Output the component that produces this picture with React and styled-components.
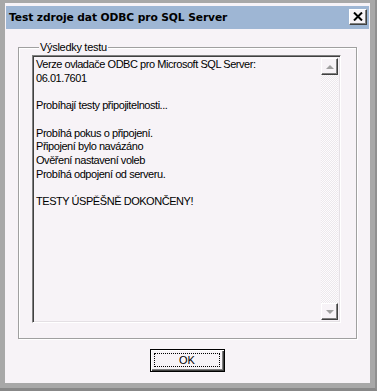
import React from "react";
import styled, { createGlobalStyle } from "styled-components";

const face = "#f7f3f7";
const frameGray = "#a8a8a8";
const shadow = "#808080";
const darkShadow = "#404040";

const GlobalStyle = createGlobalStyle`
  html, body {
    margin: 0;
    padding: 0;
    background: ${frameGray};
  }
  body {
    font-family: "Liberation Sans", Arial, sans-serif;
    font-size: 11px;
    color: #000;
  }
`;

const lines = [
  "Verze ovladače ODBC pro Microsoft SQL Server:",
  "06.01.7601",
  "",
  "Probíhají testy připojitelnosti...",
  "",
  "Probíhá pokus o připojení.",
  "Připojení bylo navázáno",
  "Ověření nastavení voleb",
  "Probíhá odpojení od serveru.",
  "",
  "TESTY ÚSPĚŠNĚ DOKONČENY!",
];

const App = () => {
  return (
    <>
      <GlobalStyle />
      <Frame>
        <Window>
          <TitleBar>
            <Title>Test zdroje dat ODBC pro SQL Server</Title>
            <CloseButton>
              <svg width="10" height="9" viewBox="0 0 10 9">
                <path d="M1 0.5 L9 8.5 M9 0.5 L1 8.5" stroke="#000" strokeWidth="2" />
              </svg>
            </CloseButton>
          </TitleBar>
          <Body>
            <GroupBox>
              <Legend>Výsledky testu</Legend>
              <ResultBox>
                <ResultText>
                  {lines.map((l, i) => (
                    <Line key={i}>{l || "\u00a0"}</Line>
                  ))}
                </ResultText>
                <ScrollBar>
                  <ScrollButton>
                    <Arrow $up />
                  </ScrollButton>
                  <Track />
                  <ScrollButton>
                    <Arrow />
                  </ScrollButton>
                </ScrollBar>
              </ResultBox>
            </GroupBox>
            <ButtonRow>
              <OkButton>
                <Focus>OK</Focus>
              </OkButton>
            </ButtonRow>
          </Body>
        </Window>
      </Frame>
    </>
  );
};

export default App;

const Frame = styled.div`
  width: 377px;
  height: 391px;
  box-sizing: border-box;
  background: ${frameGray};
  border-right: 2px solid #909090;
  border-bottom: 3px solid #888888;
  padding: 3px 5px 5px 5px;
`;

const Window = styled.div`
  height: 100%;
  background: ${face};
  display: flex;
  flex-direction: column;
  padding: 3px 1px 0 1px;
  box-sizing: border-box;
`;

const TitleBar = styled.div`
  height: 23px;
  background: #9eb6d4;
  display: flex;
  align-items: center;
  justify-content: space-between;
  padding: 0 2px 0 3px;
  flex-shrink: 0;
`;

const Title = styled.div`
  font-family: "DejaVu Sans", Verdana, sans-serif;
  font-weight: bold;
  font-size: 10.7px;
  color: #000;
  letter-spacing: -0.1px;
  margin-top: -1px;
`;

const CloseButton = styled.div`
  width: 18px;
  height: 16px;
  box-sizing: border-box;
  background: ${face};
  border-top: 1px solid #fff;
  border-left: 1px solid #fff;
  border-right: 1px solid ${darkShadow};
  border-bottom: 1px solid ${darkShadow};
  box-shadow: inset -1px -1px ${shadow};
  display: flex;
  align-items: center;
  justify-content: center;
  margin-top: -2px;
`;

const Body = styled.div`
  flex: 1;
  display: flex;
  flex-direction: column;
  padding: 18px 12px 0 12px;
`;

const GroupBox = styled.div`
  height: 292px;
  box-sizing: border-box;
  border: 1px solid #a0a0a0;
  box-shadow: inset 1px 1px #fff, 1px 1px #fff;
  padding: 0 15px 15px 13px;
  display: flex;
  flex-direction: column;
`;

const Legend = styled.div`
  align-self: flex-start;
  background: ${face};
  line-height: 13px;
  margin: -7px 0 0 7px;
  padding: 0 1px;
  height: 13px;
  letter-spacing: -0.3px;
`;

const ResultBox = styled.div`
  margin-top: 1px;
  flex: 1;
  display: flex;
  box-sizing: border-box;
  border-top: 1px solid ${shadow};
  border-left: 1px solid ${shadow};
  border-right: 1px solid #fff;
  border-bottom: 1px solid #fff;
  box-shadow: inset 1px 1px ${darkShadow}, inset -1px -1px #e4e0e4;
  padding: 2px 2px 2px 2px;
  min-height: 0;
`;

const ResultText = styled.div`
  flex: 1;
  padding: 0 0 0 1px;
`;

const Line = styled.div`
  line-height: 13.7px;
  white-space: pre;
  letter-spacing: -0.45px;
`;

const ScrollBar = styled.div`
  width: 17px;
  display: flex;
  flex-direction: column;
`;

const ScrollButton = styled.div`
  height: 17px;
  box-sizing: border-box;
  background: ${face};
  border-top: 1px solid #fff;
  border-left: 1px solid #fff;
  border-right: 1px solid ${darkShadow};
  border-bottom: 1px solid ${darkShadow};
  box-shadow: inset -1px -1px ${shadow};
  display: flex;
  align-items: center;
  justify-content: center;
`;

const Arrow = styled.div`
  width: 0;
  height: 0;
  border-left: 4px solid transparent;
  border-right: 4px solid transparent;
  ${(p) =>
    p.$up
      ? `border-bottom: 4px solid #a0a0a0;`
      : `border-top: 4px solid #a0a0a0;`}
`;

const Track = styled.div`
  flex: 1;
  background-color: #fdfbfd;
  background-image: repeating-conic-gradient(#ece8ec 0 25%, #fdfbfd 0 50%);
  background-size: 2px 2px;
`;

const ButtonRow = styled.div`
  display: flex;
  justify-content: center;
  padding-top: 10px;
`;

const OkButton = styled.div`
  width: 75px;
  height: 23px;
  box-sizing: border-box;
  border: 1px solid #000;
  background: ${face};
  box-shadow: inset 1px 1px #fff, inset -1px -1px ${darkShadow},
    inset -2px -2px ${shadow};
  padding: 3px 4px 4px 3px;
  display: flex;
`;

const Focus = styled.div`
  flex: 1;
  border: 1px dotted #000;
  display: flex;
  align-items: center;
  justify-content: center;
  font-size: 11px;
  line-height: 11px;
`;
